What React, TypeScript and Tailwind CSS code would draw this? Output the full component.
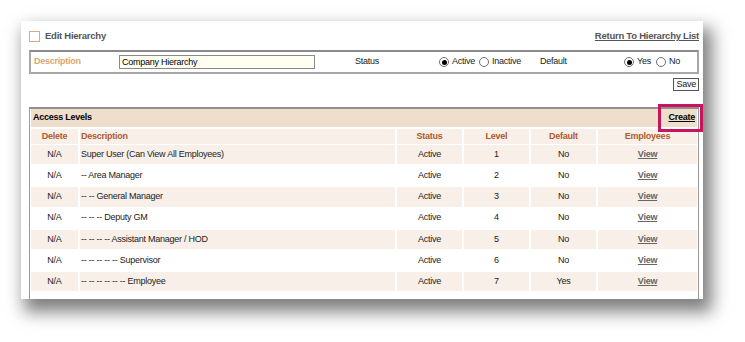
import React from 'react';

const rows = [
  { desc: 'Super User (Can View All Employees)', level: 1, def: 'No' },
  { desc: '-- Area Manager', level: 2, def: 'No' },
  { desc: '-- -- General Manager', level: 3, def: 'No' },
  { desc: '-- -- -- Deputy GM', level: 4, def: 'No' },
  { desc: '-- -- -- -- Assistant Manager / HOD', level: 5, def: 'No' },
  { desc: '-- -- -- -- -- Supervisor', level: 6, def: 'No' },
  { desc: '-- -- -- -- -- -- Employee', level: 7, def: 'Yes' },
];

function Radio({ checked }: { checked?: boolean }) {
  return (
    <span className="inline-flex items-center justify-center w-[10px] h-[10px] rounded-full border border-[#6f6f6f] bg-white">
      {checked && <span className="w-[5px] h-[5px] rounded-full bg-black" />}
    </span>
  );
}

const grid = 'grid grid-cols-[47px_315px_65px_65px_65px_99px] gap-x-[2px]';

export default function App() {
  return (
    <div
      className="w-[745px] h-[342px] bg-white overflow-hidden pt-[21px] pl-[21px] text-[9px] tracking-[-0.25px] text-[#222]"
      style={{ fontFamily: '"Liberation Sans", Arial, sans-serif' }}
    >
      <div className="w-[682px] h-[278px] bg-white shadow-[6px_10px_16px_3px_rgba(0,0,0,0.5)] pl-[8px] pr-[4px] pt-[9px]">
        {/* Title row */}
        <div className="flex items-center h-[12px]">
          <span className="w-[11px] h-[11px] border border-[#dcaa7c] bg-white" />
          <span className="ml-[5px] font-bold text-[#555] text-[9.5px]">Edit Hierarchy</span>
          <a className="ml-auto font-bold text-[#555] underline text-[9.5px]">Return To Hierarchy List</a>
        </div>

        {/* Form box */}
        <div className="mt-[8px] h-[24px] border-2 border-[#a8a8a8] border-t-[#8a8a8a] flex items-center pl-[3px]">
          <span className="w-[85px] font-bold text-[#dca671]">Description</span>
          <span className="w-[196px] h-[14px] border border-[#8a8a8a] bg-[#fffff2] pl-[2px] leading-[12px] text-black">
            Company Hierarchy
          </span>
          <span className="ml-[40px] w-[84px]">Status</span>
          <span className="flex items-center gap-[3px]">
            <Radio checked />
            <span>Active</span>
          </span>
          <span className="flex items-center gap-[3px] ml-[4px]">
            <Radio />
            <span>Inactive</span>
          </span>
          <span className="ml-[19px] w-[84px]">Default</span>
          <span className="flex items-center gap-[3px]">
            <Radio checked />
            <span>Yes</span>
          </span>
          <span className="flex items-center gap-[3px] ml-[5px]">
            <Radio />
            <span>No</span>
          </span>
        </div>

        {/* Save */}
        <div className="flex justify-end mt-[4px]">
          <button className="h-[13px] px-[2px] border border-[#555] bg-[#fafafa] text-[9px] leading-[11px] text-[#222]">
            Save
          </button>
        </div>

        {/* Access levels */}
        <div className="mt-[16px] h-[192px] border-l border-r border-t-2 border-[#9a9a9a] border-t-[#8f8f8f] px-[1px]">
          <div className="relative h-[18px] bg-[#efdecc] flex items-center pl-[2px]">
            <span className="font-bold text-black">Access Levels</span>
            <div className="absolute right-[-6px] top-[-5px] w-[45px] h-[28px] border-[3px] border-[#c8145c] flex items-center justify-end pr-[5px]">
              <a className="font-bold text-black underline">Create</a>
            </div>
          </div>

          <div className={`${grid} mt-[2px] h-[15px] font-bold text-[#b05a2c]`}>
            <div className="bg-[#f8efe9] flex items-center justify-center">Delete</div>
            <div className="bg-[#f8efe9] flex items-center pl-[1px]">Description</div>
            <div className="bg-[#f8efe9] flex items-center justify-center">Status</div>
            <div className="bg-[#f8efe9] flex items-center justify-center">Level</div>
            <div className="bg-[#f8efe9] flex items-center justify-center">Default</div>
            <div className="bg-[#f8efe9] flex items-center justify-center">Employees</div>
          </div>

          <div className="mt-[1px] flex flex-col gap-y-[2px]">
            {rows.map((r, i) => {
              const bg = i % 2 === 0 ? 'bg-[#f8efe9]' : 'bg-white';
              return (
                <div key={i} className={`${grid} h-[19.2px]`}>
                  <div className={`${bg} flex items-center justify-center`}>N/A</div>
                  <div className={`${bg} flex items-center pl-[1px]`}>{r.desc}</div>
                  <div className={`${bg} flex items-center justify-center`}>Active</div>
                  <div className={`${bg} flex items-center justify-center`}>{r.level}</div>
                  <div className={`${bg} flex items-center justify-center`}>{r.def}</div>
                  <div className={`${bg} flex items-center justify-center`}>
                    <a className="font-bold text-[#666] underline">View</a>
                  </div>
                </div>
              );
            })}
          </div>
        </div>
      </div>
    </div>
  );
}
